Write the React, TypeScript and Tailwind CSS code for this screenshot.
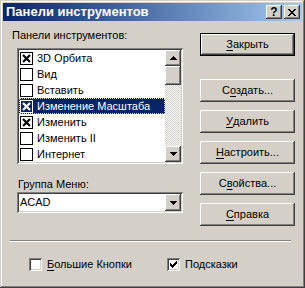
import React from "react";

const raised =
  "bg-[#d4d0c8] shadow-[inset_-1px_-1px_#404040,inset_1px_1px_#ffffff,inset_-2px_-2px_#808080,inset_2px_2px_#d4d0c8]";
const sunken =
  "shadow-[inset_1px_1px_#808080,inset_-1px_-1px_#ffffff,inset_2px_2px_#404040,inset_-2px_-2px_#d4d0c8]";

const items = [
  { label: "3D Орбита", checked: true },
  { label: "Вид", checked: false },
  { label: "Вставить", checked: false },
  { label: "Изменение Масштаба", checked: true, selected: true },
  { label: "Изменить", checked: true },
  { label: "Изменить II", checked: false },
  { label: "Интернет", checked: false },
];

const Arrow = ({ up }: { up?: boolean }) => (
  <svg width="7" height="4" viewBox="0 0 7 4" shapeRendering="crispEdges">
    <path d={up ? "M3 0h1v1h1v1h1v1h1v1H0V3h1V2h1V1h1z" : "M0 0h7v1H6v1H5v1H4v1H3V3H2V2H1V1H0z"} fill="#000" />
  </svg>
);

const ListCheck = ({ checked, selected }: { checked: boolean; selected?: boolean }) => {
  const c = selected ? "#ffffff" : "#000000";
  return (
    <span
      className={`w-[13px] h-[13px] shrink-0 flex items-center justify-center border ${
        selected ? "border-white bg-[#0a246a]" : "border-black bg-white"
      }`}
    >
      {checked && (
        <svg width="9" height="9" viewBox="0 0 9 9">
          <path d="M1 1L8 8M8 1L1 8" stroke={c} strokeWidth="2.2" />
        </svg>
      )}
    </span>
  );
};

const Btn = ({ pre, u, post, isDefault }: { pre?: string; u: string; post?: string; isDefault?: boolean }) => (
  <button
    className={`w-[95px] h-[23px] flex items-center justify-center text-black ${
      isDefault ? "border border-black" : ""
    }`}
  >
    <span className={`w-full h-full flex items-center justify-center ${raised}`}>
      {pre}
      <span className="underline underline-offset-[2px]">{u}</span>
      {post}
    </span>
  </button>
);

const SunkenCheck = ({ checked }: { checked: boolean }) => (
  <span className={`w-[13px] h-[13px] shrink-0 bg-white flex items-center justify-center ${sunken}`}>
    {checked && (
      <svg width="7" height="7" viewBox="0 0 7 7" shapeRendering="crispEdges">
        <path d="M6 0h1v3H6v1H5v1H4v1H3v1H2V6H1V5H0V2h1v1h1v1h1V3h1V2h1V1h1z" fill="#000" />
      </svg>
    )}
  </span>
);

export default function App() {
  return (
    <div className="w-[305px] h-[288px] bg-[#d4d0c8] p-[3px] flex flex-col font-['Liberation_Sans',Arial,sans-serif] text-[11px] leading-[13px] text-black shadow-[inset_-1px_-1px_#404040,inset_1px_1px_#d4d0c8,inset_-2px_-2px_#808080,inset_2px_2px_#ffffff] select-none">
      {/* title bar */}
      <div className="h-[18px] flex items-center bg-gradient-to-r from-[#0a246a] to-[#a6caf0]">
        <span className="pl-[3px] text-white font-bold text-[13px] leading-[16px]">Панели инструментов</span>
        <div className="ml-auto mr-[2px] flex gap-[2px]">
          <span className={`w-[16px] h-[14px] flex items-center justify-center font-bold text-[12px] ${raised}`}>?</span>
          <span className={`w-[16px] h-[14px] flex items-center justify-center ${raised}`}>
            <svg width="8" height="7" viewBox="0 0 8 7" shapeRendering="crispEdges">
              <path d="M0 0h2v1h1v1h2V1h1V0h2v1H7v1H6v1H5v1h1v1h1v1h1v1H6V6H5V5H3v1H2v1H0V6h1V5h1V4h1V3H2V2H1V1H0z" fill="#000" />
            </svg>
          </span>
        </div>
      </div>

      {/* body */}
      <div className="flex-1 flex flex-col">
        <div className="flex items-start">
          <div className="w-[171px] ml-[9px] mt-[8px] flex flex-col">
            <span>Панели инструментов:</span>
            <div className={`mt-[6px] ml-[5px] w-[166px] h-[116px] bg-white p-[2px] flex ${sunken}`}>
              <div className="flex-1 flex flex-col">
                {items.map((it) => (
                  <div key={it.label} className="h-[16px] flex items-center">
                    <div
                      className={`h-[16px] flex-1 flex items-center pl-[1px] ${
                        it.selected ? "bg-[#0a246a] text-white outline-1 outline-dotted outline-offset-[-1px] outline-[#d4d0c8]" : ""
                      }`}
                    >
                      <ListCheck checked={it.checked} selected={it.selected} />
                      <span className="ml-[4px] whitespace-nowrap">{it.label}</span>
                    </div>
                  </div>
                ))}
              </div>
              <div className="w-[16px] flex flex-col">
                <span className={`h-[16px] flex items-center justify-center ${raised}`}>
                  <Arrow up />
                </span>
                <span className={`h-[19px] ${raised}`} />
                <span className="flex-1 bg-[repeating-conic-gradient(#ffffff_0_25%,#d4d0c8_0_50%)] bg-[length:2px_2px]" />
                <span className={`h-[16px] flex items-center justify-center ${raised}`}>
                  <Arrow />
                </span>
              </div>
            </div>
            <span className="mt-[14px] ml-[6px]">Группа Меню:</span>
            <div className={`mt-[1px] ml-[5px] w-[166px] h-[21px] bg-white p-[2px] flex items-center ${sunken}`}>
              <span className="flex-1 pl-[1px]">ACAD</span>
              <span className={`w-[16px] h-[17px] flex items-center justify-center ${raised}`}>
                <Arrow />
              </span>
            </div>
          </div>

          <div className="ml-[17px] mt-[12px] flex flex-col gap-[8px]">
            <div className="mb-[15px]">
              <Btn u="З" post="акрыть" isDefault />
            </div>
            <Btn pre="С" u="о" post="здать..." />
            <Btn u="У" post="далить" />
            <Btn u="Н" post="астроить..." />
            <Btn pre="С" u="в" post="ойства..." />
            <Btn u="С" post="правка" />
          </div>
        </div>

        <div className="mt-[14px] ml-[7px] w-[281px] h-[2px] border-t border-t-[#808080] border-b border-b-white" />

        <div className="mt-[16px] flex items-center h-[13px]">
          <div className="ml-[26px] w-[138px] flex items-center">
            <SunkenCheck checked={false} />
            <span className="ml-[5px]">
              <span className="underline underline-offset-[2px]">Б</span>ольшие Кнопки
            </span>
          </div>
          <div className="flex items-center">
            <SunkenCheck checked />
            <span className="ml-[5px]">Подсказки</span>
          </div>
        </div>
      </div>
    </div>
  );
}
